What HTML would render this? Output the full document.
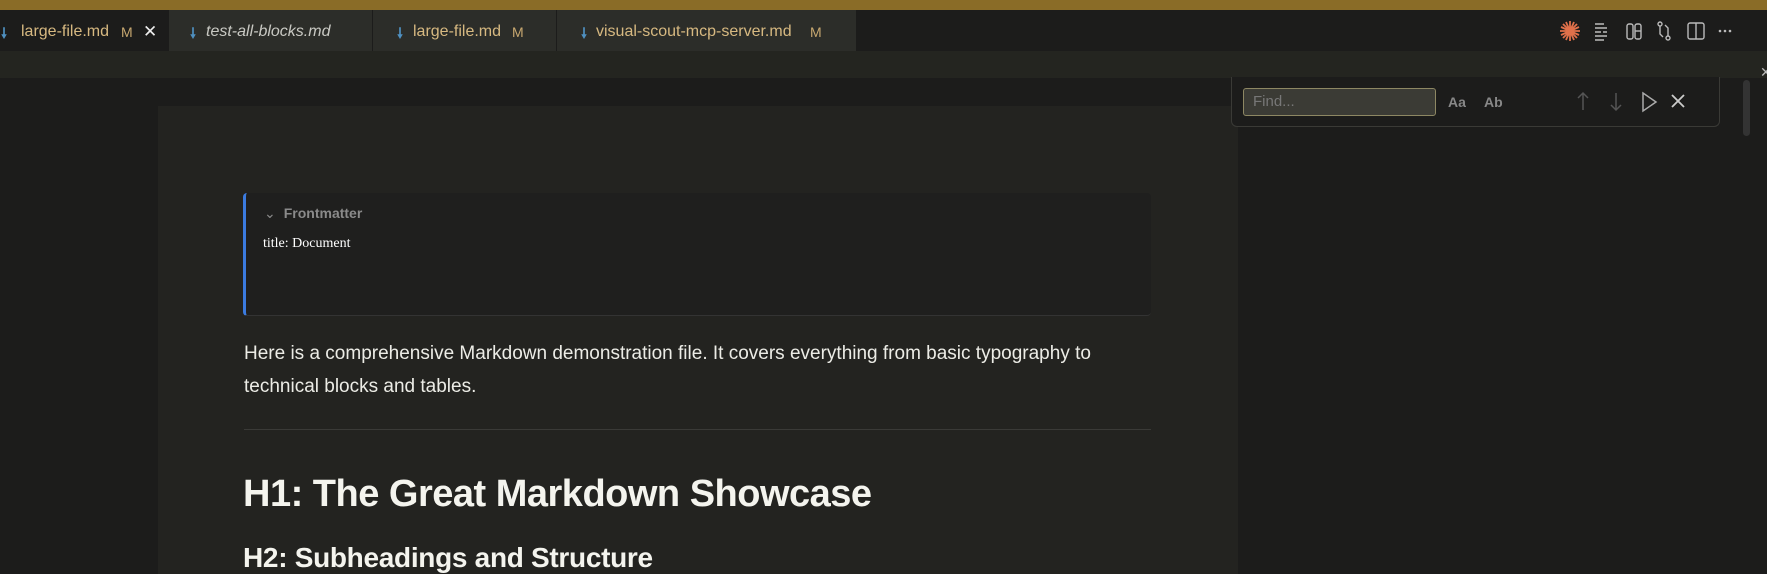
<!DOCTYPE html>
<html><head><meta charset="utf-8"><style>
*{margin:0;padding:0;box-sizing:border-box}
body{width:1767px;height:574px;overflow:hidden;background:#1c1c1b;font-family:"Liberation Sans",sans-serif;position:relative}
.gold{position:absolute;left:0;top:0;width:1767px;height:10px;background:#8a6c27}
.tabs{position:absolute;left:0;top:10px;width:1767px;height:41px;background:#1c1c1b}
.tab{position:absolute;top:0;height:41px;font-size:16px;white-space:nowrap;color:#d7b981;background:#2c2d29;border-right:1px solid #1c1c1b}
.tab span{position:absolute;top:13px}
.ic{color:#4f90c0;font-size:14px;font-weight:bold}
.m{font-size:14px;color:#c8a870;top:14px!important}
.strip{position:absolute;left:0;top:51px;width:1767px;height:27px;background:#242520}
.page{position:absolute;left:158px;top:106px;width:1080px;height:468px;background:#232320}
.fm{position:absolute;left:243px;top:193px;width:908px;height:123px;background:#1f1f1e;border-left:3px solid #3b7be0;border-bottom:1px solid #333;border-radius:4px}
.fm .h{position:absolute;left:18px;top:12px;color:#8a8a8a;font-weight:bold;font-size:14px}
.fm .t{position:absolute;left:17px;top:43px;color:#fff;font-family:"Liberation Serif",serif;font-size:14px}
.p{position:absolute;left:244px;top:337px;width:920px;color:#ecece6;font-size:19px;line-height:33px}
.hr{position:absolute;left:244px;top:429px;width:907px;height:1px;background:#3a3a37}
.h1{position:absolute;left:243px;top:473px;color:#f4f4ee;font-size:38px;font-weight:bold;letter-spacing:-0.5px}
.h2{position:absolute;left:243px;top:542px;color:#f4f4ee;font-size:28px;font-weight:bold;letter-spacing:-0.3px}
.find{position:absolute;left:1231px;top:77px;width:489px;height:50px;background:#1c1c1b;border:1px solid #3a3a36;border-top:none;border-radius:0 0 6px 6px}
.inp{position:absolute;left:11px;top:11px;width:193px;height:28px;background:#3b3b35;border:1px solid #8d8763;border-radius:3px;color:#777;font-size:15px;padding:4px 9px}
.fb{position:absolute;top:17px;color:#888;font-weight:bold;font-size:14px}
.sb{position:absolute;left:1743px;top:80px;width:7px;height:56px;background:#333;border-radius:4px}
</style></head><body>
<div class="gold"></div>
<div class="tabs">
 <div class="tab" style="left:0;width:169px;background:#1c1c1b"><span class="ic" style="left:1px">🠗</span><span style="left:21px">large-file.md</span><span class="m" style="left:121px">M</span><span style="left:143px;color:#eee;font-size:17px;top:12px">✕</span></div>
 <div class="tab" style="left:169px;width:204px;color:#c9c9c3;font-style:italic"><span class="ic" style="left:21px;font-style:normal">🠗</span><span style="left:37px">test-all-blocks.md</span></div>
 <div class="tab" style="left:373px;width:184px"><span class="ic" style="left:24px">🠗</span><span style="left:40px">large-file.md</span><span class="m" style="left:139px">M</span></div>
 <div class="tab" style="left:557px;width:300px"><span class="ic" style="left:24px">🠗</span><span style="left:39px">visual-scout-mcp-server.md</span><span class="m" style="left:253px">M</span></div>
</div>
<svg style="position:absolute;left:1560px;top:18px" width="200" height="26" viewBox="0 0 200 26" fill="none" stroke="#bbb" stroke-width="1.4">
 <g stroke="#e0704a" stroke-width="1.8"><path d="M10 3v20M0 13h20M3 6l14 14M17 6L3 20M6 4l8 18M14 4L6 22M1 9l18 8M19 9L1 17"/></g>
 <path d="M35 6h9M35 10h12M35 14h6M43 14h4M35 18h12M35 22h9"/>
 <rect x="67" y="6" width="6" height="15" rx="2"/><rect x="75" y="6" width="6" height="15" rx="2"/><path d="M75 13h6"/>
 <circle cx="100" cy="6" r="2"/><circle cx="108" cy="20" r="2"/><path d="M100 8v8l3 3M108 18v-8l-3-3"/>
 <rect x="128" y="5" width="16" height="16" rx="2"/><path d="M136 5v16"/>
 <g fill="#bbb" stroke="none"><circle cx="160" cy="13" r="1.3"/><circle cx="165" cy="13" r="1.3"/><circle cx="170" cy="13" r="1.3"/></g>
</svg>
<div class="strip"></div>
<div style="position:absolute;left:1760px;top:64px;color:#bbb;font-size:14px">✕</div>
<div class="page"></div>
<div class="fm"><div class="h"><span style="font-weight:normal;margin-right:8px">⌄</span>Frontmatter</div><div class="t">title: Document</div></div>
<div class="p">Here is a comprehensive Markdown demonstration file. It covers everything from basic typography to technical blocks and tables.</div>
<div class="hr"></div>
<div class="h1">H1: The Great Markdown Showcase</div>
<div class="h2">H2: Subheadings and Structure</div>
<div class="find">
 <div class="inp">Find...</div>
 <div class="fb" style="left:216px">Aa</div>
 <div class="fb" style="left:252px">Ab</div>
 <svg style="position:absolute;left:0;top:0" width="489" height="50" fill="none" stroke-width="1.5">
  <path d="M351 16v17M346 21l5-5 5 5" stroke="#555"/>
  <path d="M384 16v17M379 28l5 5 5-5" stroke="#555"/>
  <path d="M411 16l13 9-13 9z" stroke="#aaa"/>
  <path d="M440 18l12 12M452 18l-12 12" stroke="#ccc" stroke-width="1.8"/>
 </svg>
</div>
<div class="sb"></div>
</body></html>
